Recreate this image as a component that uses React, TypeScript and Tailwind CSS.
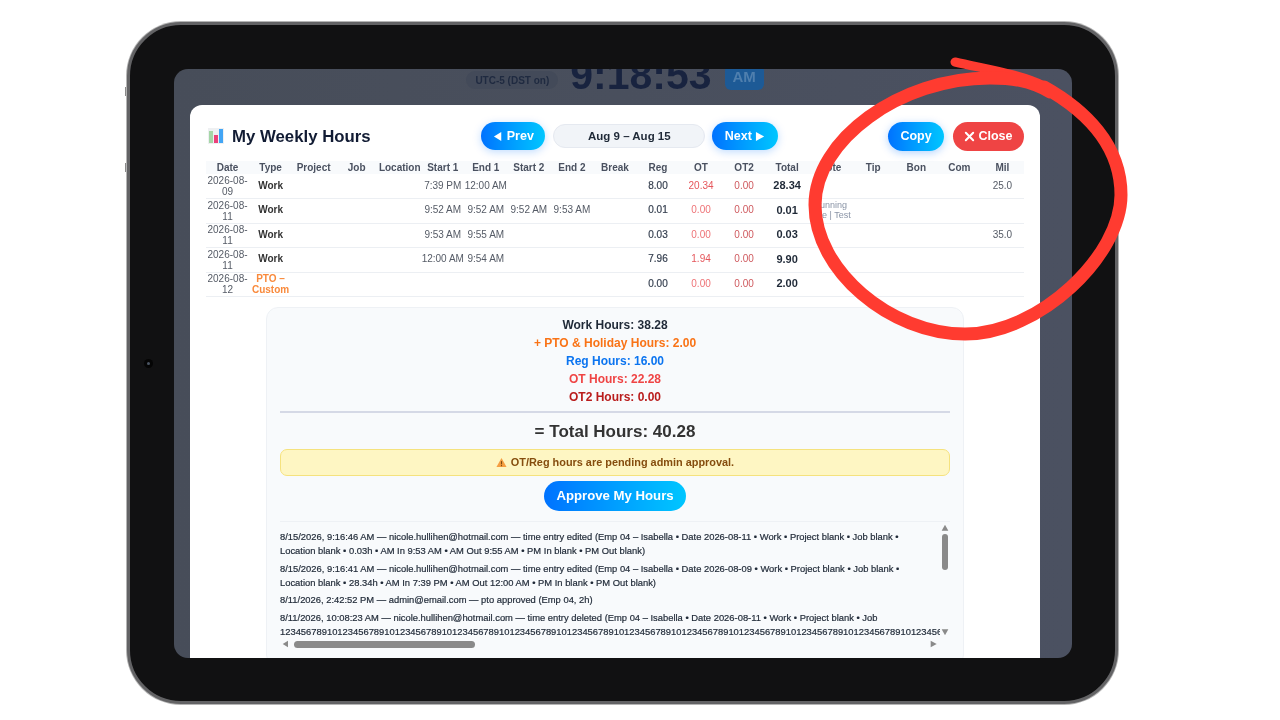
const rows = [
  { date: "2026-08-09", type: "Work", start1: "7:39 PM", end1: "12:00 AM", reg: "8.00", ot: "20.34", ot2: "0.00", total: "28.34", mil: "25.0" },
  { date: "2026-08-11", type: "Work", start1: "9:52 AM", end1: "9:52 AM", start2: "9:52 AM", end2: "9:53 AM", reg: "0.01", ot: "0.00", ot2: "0.00", total: "0.01", note: "Running Late | Test" },
  { date: "2026-08-11", type: "Work", start1: "9:53 AM", end1: "9:55 AM", reg: "0.03", ot: "0.00", ot2: "0.00", total: "0.03", mil: "35.0" },
  { date: "2026-08-11", type: "Work", start1: "12:00 AM", end1: "9:54 AM", reg: "7.96", ot: "1.94", ot2: "0.00", total: "9.90" },
  { date: "2026-08-12", type: "PTO – Custom", reg: "0.00", ot: "0.00", ot2: "0.00", total: "2.00" },
];

const headers = ["Date", "Type", "Project", "Job", "Location", "Start 1", "End 1", "Start 2", "End 2", "Break", "Reg", "OT", "OT2", "Total", "Note", "Tip", "Bon", "Com", "Mil"];

const logs = [
  ["8/15/2026, 9:16:46 AM — nicole.hullihen@hotmail.com — time entry edited (Emp 04 – Isabella • Date 2026-08-11 • Work • Project blank • Job blank •", "Location blank • 0.03h • AM In 9:53 AM • AM Out 9:55 AM • PM In blank • PM Out blank)"],
  ["8/15/2026, 9:16:41 AM — nicole.hullihen@hotmail.com — time entry edited (Emp 04 – Isabella • Date 2026-08-09 • Work • Project blank • Job blank •", "Location blank • 28.34h • AM In 7:39 PM • AM Out 12:00 AM • PM In blank • PM Out blank)"],
  ["8/11/2026, 2:42:52 PM — admin@email.com — pto approved (Emp 04, 2h)"],
  ["8/11/2026, 10:08:23 AM — nicole.hullihen@hotmail.com — time entry deleted (Emp 04 – Isabella • Date 2026-08-11 • Work • Project blank • Job", "1234567891012345678910123456789101234567891012345678910123456789101234567891012345678910123456789101234567891012345678910123456789101234567891012345678910"],
];

const summary = [
  { text: "Work Hours: 38.28", color: "text-[#1f2937]" },
  { text: "+ PTO & Holiday Hours: 2.00", color: "text-[#f97316]" },
  { text: "Reg Hours: 16.00", color: "text-[#0b74f0]" },
  { text: "OT Hours: 22.28", color: "text-[#ef4444]" },
  { text: "OT2 Hours: 0.00", color: "text-[#b91c1c]" },
];

function ChartIcon() {
  return (
    <svg width="16" height="16" viewBox="0 0 16 16" className="shrink-0">
      <rect width="16" height="16" fill="#eef0f2" />
      <rect x="1" y="3" width="4" height="12" fill="#a5d6a7" />
      <rect x="6" y="7" width="4" height="8" fill="#ec407a" />
      <rect x="11" y="1" width="4" height="14" fill="#42a5f5" />
    </svg>
  );
}

function Triangle({ dir, className }: { dir: "left" | "right" | "up" | "down"; className: string }) {
  const points = { left: "9,1 9,11 1,6", right: "1,1 1,11 10,6", up: "1,10 11,10 6,1", down: "1,2 11,2 6,11" }[dir];
  return (
    <svg viewBox="0 0 12 12" className={className} fill="currentColor">
      <polygon points={points} />
    </svg>
  );
}

export default function App() {
  return (
    <div className="relative w-[1280px] h-[720px] overflow-hidden bg-white font-['Liberation_Sans',sans-serif] pt-[22px] pl-[127px]">
      {/* side buttons */}
      <div className="absolute left-[125px] top-[87px] w-[2px] h-[9px] bg-[#8a8a8a]" />
      <div className="absolute left-[125px] top-[163px] w-[2px] h-[9px] bg-[#8a8a8a]" />

      <div className="relative w-[991px] h-[682px] rounded-[54px] border-[3px] border-[#636365] ring-1 ring-[#b5b5b5] bg-[#111112] pt-[44px] pl-[44px]">
        <div className="absolute left-[14px] top-[334px] w-[9px] h-[9px] rounded-full bg-[#050505] flex items-center justify-center">
          <div className="w-[3px] h-[3px] rounded-full bg-[#4b5563]" />
        </div>

        <div className="w-[898px] h-[589px] rounded-[14px] bg-gradient-to-r from-[#474d59] to-[#4b5161] overflow-hidden blur-[0.35px]">
          {/* clock behind the modal */}
          <div className="flex items-start justify-center gap-[12px] h-[36px] pr-[16px]">
            <div className="mt-[2px] h-[18px] px-[9px] rounded-full bg-[#434a59] text-[10px] font-bold text-[#1f2a40] flex items-center">UTC-5 (DST on)</div>
            <div className="-mt-[20px] text-[41px] leading-[52px] font-bold text-[#18233f]">9:18:53</div>
            <div className="-mt-[4px] ml-[1px] h-[25px] w-[39px] rounded-[6px] bg-[#1d5a96] text-[15px] font-bold text-[#4f7fae] flex items-center justify-center">AM</div>
          </div>

          <div className="ml-[16px] w-[850px] h-[560px] rounded-t-[12px] bg-white px-[16px] pt-[17px]">
            {/* header */}
            <div className="flex items-center justify-between h-[28px]">
              <div className="flex items-center gap-[8px] pl-[2px]">
                <ChartIcon />
                <h1 className="pt-px text-[16.8px] font-bold text-[#111b33]">My Weekly Hours</h1>
              </div>
              <div className="flex items-center gap-[8px] pl-[1px]">
                <button className="h-[28px] w-[64px] pt-px rounded-full bg-gradient-to-r from-[#0072ff] to-[#00c6ff] text-white text-[12.5px] font-bold flex items-center justify-center gap-[3px] shadow-[0_2px_8px_rgba(0,114,255,0.25)]">
                  <Triangle dir="left" className="w-[11px] h-[11px]" />
                  Prev
                </button>
                <div className="h-[24px] w-[152px] pt-px rounded-full bg-[#f1f4f8] border border-[#e5e9f0] text-[11.5px] font-bold text-[#1f2937] flex items-center justify-center">Aug 9 – Aug 15</div>
                <button className="-ml-px h-[28px] w-[66px] pt-px rounded-full bg-gradient-to-r from-[#0072ff] to-[#00c6ff] text-white text-[12.5px] font-bold flex items-center justify-center gap-[3px] shadow-[0_2px_8px_rgba(0,114,255,0.25)]">
                  Next
                  <Triangle dir="right" className="w-[11px] h-[11px]" />
                </button>
              </div>
              <div className="flex items-center gap-[9px]">
                <button className="h-[29px] w-[56px] pt-px rounded-full bg-gradient-to-r from-[#0072ff] to-[#00c6ff] text-white text-[12.5px] font-bold shadow-[0_2px_8px_rgba(0,114,255,0.3)]">Copy</button>
                <button className="h-[29px] w-[71px] pt-px rounded-full bg-[#ef4444] text-white text-[12.5px] font-bold flex items-center justify-center gap-[3px]">
                  <svg viewBox="0 0 12 12" className="w-[11px] h-[11px]" stroke="currentColor" strokeWidth="2.2" strokeLinecap="round">
                    <path d="M2 2l8 8M10 2l-8 8" />
                  </svg>
                  Close
                </button>
              </div>
            </div>

            {/* weekly table */}
            <table className="mt-[11px] w-[818px] table-fixed border-collapse text-[10px] text-center">
              <thead>
                <tr className="h-[13px] bg-[#f8fafc] text-[#4a5160]">
                  {headers.map((h) => (
                    <th key={h} className="p-0 font-bold whitespace-nowrap leading-[13px]">{h}</th>
                  ))}
                </tr>
              </thead>
              <tbody>
                {rows.map((r, i) => (
                  <tr key={i} className="h-[24.5px] border-b border-[#eceff3]">
                    <td className="p-0 leading-[11px] text-[#555b66]">{r.date}</td>
                    <td className={r.type === "Work" ? "p-0 pb-[2px] font-bold text-[#333]" : "p-0 font-bold leading-[11px] text-[#f98a3c]"}>{r.type}</td>
                    <td />
                    <td />
                    <td />
                    <td className="p-0 pb-[2px] text-[#555b66] whitespace-nowrap">{r.start1}</td>
                    <td className="p-0 pb-[2px] text-[#555b66] whitespace-nowrap">{r.end1}</td>
                    <td className="p-0 pb-[2px] text-[#555b66] whitespace-nowrap">{r.start2}</td>
                    <td className="p-0 pb-[2px] text-[#555b66] whitespace-nowrap">{r.end2}</td>
                    <td />
                    <td className="p-0 pb-[2px] text-[#374151] [-webkit-text-stroke:0.2px_#374151]">{r.reg}</td>
                    <td className={r.ot === "0.00" ? "p-0 pb-[2px] text-[#ee7377]" : "p-0 pb-[2px] text-[#e5565b]"}>{r.ot}</td>
                    <td className="p-0 pb-[2px] text-[#cf5a5f]">{r.ot2}</td>
                    <td className="p-0 pb-[2px] text-[11px] font-bold text-[#1f2937]">{r.total}</td>
                    <td className="p-0 pb-[2px] text-[9px] leading-[10px] text-[#8a94a6]">{r.note}</td>
                    <td />
                    <td />
                    <td />
                    <td className="p-0 pb-[2px] text-[#555b66]">{r.mil}</td>
                  </tr>
                ))}
              </tbody>
            </table>

            {/* summary card */}
            <div className="mx-auto mt-[10px] w-[698px] h-[360px] rounded-[12px] bg-[#f8fafc] border border-[#eef1f5] px-[13px] pt-[8px]">
              <div className="flex flex-col items-center text-[12px] font-bold leading-[18px]">
                {summary.map((s) => (
                  <div key={s.text} className={s.color}>{s.text}</div>
                ))}
              </div>
              <div className="mt-[5px] h-[2px] bg-[#d5d9e6]" />
              <div className="mt-[9px] text-center text-[17px] leading-[20px] font-bold text-[#333]">= Total Hours: 40.28</div>
              <div className="mt-[7px] h-[27px] rounded-[7px] bg-[#fef6c3] border border-[#f5e27e] flex items-center justify-center gap-[4px] text-[10.9px] font-bold text-[#854d0e]">
                <svg viewBox="0 0 12 12" className="w-[11px] h-[11px]">
                  <polygon points="6,1 11.5,11 0.5,11" fill="#f59e42" />
                  <rect x="5.4" y="4.5" width="1.2" height="3.5" fill="#7c4a10" />
                  <rect x="5.4" y="8.8" width="1.2" height="1.2" fill="#7c4a10" />
                </svg>
                OT/Reg hours are pending admin approval.
              </div>
              <div className="mt-[5px] flex justify-center">
                <button className="h-[30px] w-[142px] rounded-full bg-gradient-to-r from-[#0072ff] to-[#00c6ff] text-white text-[13.2px] font-bold">Approve My Hours</button>
              </div>

              {/* activity log */}
              <div className="mt-[10px] border-t border-[#eef1f5]">
                <div className="flex h-[115px]">
                  <div className="w-[660px] overflow-hidden pt-[8px] text-[9.4px] leading-[14px] text-[#1f2937] [-webkit-text-stroke:0.2px_#1f2937] whitespace-nowrap">
                    {logs.map((l, i) => (
                      <div key={i} className="mb-[3.5px]">
                        {l.map((line) => (
                          <div key={line}>{line}</div>
                        ))}
                      </div>
                    ))}
                  </div>
                  <div className="w-[10px] flex flex-col items-center justify-between pt-[2px] text-[#8a8a8a]">
                    <div className="flex flex-col items-center gap-[2px]">
                      <Triangle dir="up" className="w-[8px] h-[8px]" />
                      <div className="w-[6px] h-[36px] rounded-full bg-[#8a8a8a]" />
                    </div>
                    <Triangle dir="down" className="w-[8px] h-[8px] mb-[1px]" />
                  </div>
                </div>
                <div className="mt-[2px] flex items-center h-[10px] text-[#8a8a8a]">
                  <Triangle dir="left" className="w-[8px] h-[8px] ml-[2px]" />
                  <div className="ml-[4px] w-[181px] h-[7px] rounded-full bg-[#8a8a8a]" />
                  <div className="flex-1" />
                  <Triangle dir="right" className="w-[8px] h-[8px] mr-[12px]" />
                </div>
              </div>
            </div>
          </div>
        </div>
      </div>

      {/* hand drawn annotation */}
      <svg className="absolute inset-0 pointer-events-none" width="1280" height="720" viewBox="0 0 1280 720" fill="none">
        <path d="M955 62 C985 69 1020 74 1044 86" stroke="#ff3b30" strokeWidth="9" strokeLinecap="round" />
        <path
          d="M1044 87 C1085 110 1121 145 1121 195 C1121 255 1040 334 965 334 C890 334 815 270 815 205 C815 140 900 78 990 78 C1010 78 1030 80 1050 92"
          stroke="#ff3b30"
          strokeWidth="13"
          strokeLinecap="round"
        />
      </svg>
    </div>
  );
}
